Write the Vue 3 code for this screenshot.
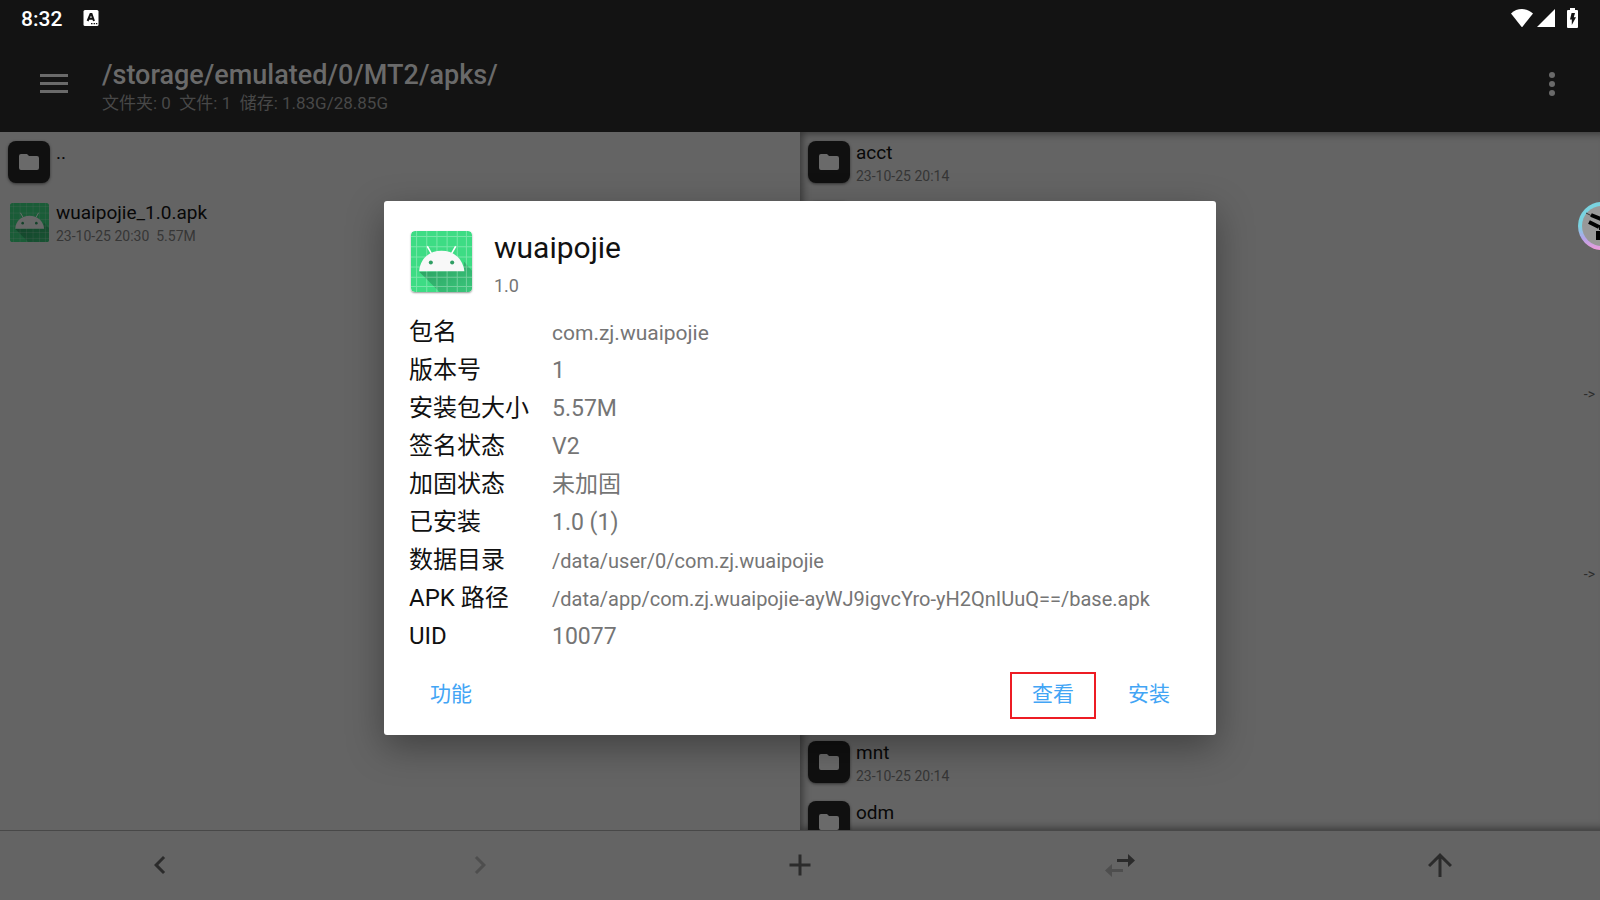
<!-- src/App.vue -->
<template>
  <div class="screen">
    <header class="top">
      <div class="status-bar">
        <span class="clock">8:32</span>
        <svg class="keyboard" viewBox="0 0 16 18" aria-hidden="true">
          <rect x="0.5" y="1" width="15" height="16" rx="1.5" fill="#fff" />
          <path d="M4.6 12 L7.5 5 L8.5 5 L11 12 M5.5 9.8 H10" fill="none" stroke="#131313" stroke-width="2" />
          <path d="M8 14h1.5v1.2H8zM10.6 14h1.5v1.2h-1.5zM13 14h1.3v1.2H13z" fill="#131313" />
        </svg>
        <div class="indicators">
          <svg class="wifi" viewBox="0 0 22 18" aria-hidden="true">
            <path d="M11 18.4 L0 4.4 C3 1.5 7 0 11 0 C15 0 19 1.5 22 4.4 Z" fill="#fff" />
          </svg>
          <svg class="signal" viewBox="0 0 18 18" aria-hidden="true">
            <path d="M0 18 L18 0 V18 Z" fill="#fff" />
          </svg>
          <svg class="battery" viewBox="0 0 11 20" aria-hidden="true">
            <path d="M3 0h5v2h2a1 1 0 0 1 1 1v16a1 1 0 0 1-1 1H1a1 1 0 0 1-1-1V3a1 1 0 0 1 1-1h2z" fill="#fff" />
            <path d="M4.6 5 H8 L6.8 9.2 H9 L4.8 17 V11.6 H3 Z" fill="#131313" />
          </svg>
        </div>
      </div>

      <div class="toolbar">
        <button class="icon-button" type="button" aria-label="Menu">
          <svg width="28" height="20" viewBox="0 0 28 20">
            <path d="M0 0h28v3H0zM0 8h28v3H0zM0 16h28v3H0z" fill="#6a6a6a" />
          </svg>
        </button>
        <div class="location">
          <h1>/storage/emulated/0/MT2/apks/</h1>
          <p>{{ storageInfo }}</p>
        </div>
        <button class="icon-button" type="button" aria-label="More">
          <svg width="6" height="24" viewBox="0 0 6 24">
            <circle v-for="y in [3, 12, 21]" :key="y" cx="3" :cy="y" r="3" fill="#6a6a6a" />
          </svg>
        </button>
      </div>
    </header>

    <main class="panels">
      <ul v-for="(files, side) in panels" :key="side" class="panel" :class="side">
        <li v-for="(file, index) in files" :key="index" class="file">
          <svg v-if="file.apk" class="apk-icon" viewBox="0 0 60 60" aria-hidden="true">
            <use href="#apk-logo" />
          </svg>
          <span v-else class="folder-icon">
            <svg width="20" height="16" viewBox="0 0 20 16" aria-hidden="true">
              <path d="M2 0h6l2 2h8a2 2 0 0 1 2 2v10a2 2 0 0 1-2 2H2a2 2 0 0 1-2-2V2a2 2 0 0 1 2-2z" fill="#6a6a6a" />
            </svg>
          </span>
          <div class="file-text">
            <div class="name">{{ file.name }}</div>
            <div class="meta">{{ file.meta }}</div>
          </div>
          <span v-if="file.link" class="link">-&gt;</span>
        </li>
      </ul>
    </main>

    <nav class="bottom-bar">
      <button
        v-for="action in navActions"
        :key="action.label"
        type="button"
        :aria-label="action.label"
        :disabled="action.disabled"
      >
        <svg width="36" height="36" viewBox="0 0 36 36">
          <path v-if="action.faded" :d="action.faded" class="faded" />
          <path :d="action.path" />
        </svg>
      </button>
    </nav>

    <!-- Floating ball, docked half outside the right edge -->
    <div class="ball">
      <svg viewBox="0 0 40 40" aria-hidden="true">
        <path d="M4 7 L12 11" stroke="#333" stroke-width="1" />
        <path
          d="M9 9 L19 13 M7 16 L17 21 M16 25 V34 M19 19 V24"
          fill="none"
          stroke="#000"
          stroke-width="4"
        />
      </svg>
    </div>

    <div class="overlay">
      <section class="dialog" role="dialog" aria-labelledby="app-name">
        <div class="app">
          <svg class="app-icon" viewBox="0 0 60 60" aria-hidden="true">
            <defs>
              <clipPath id="apk-clip"><rect width="60" height="60" rx="4" /></clipPath>
              <linearGradient id="apk-shade" x1="0" y1="0" x2="1" y2="1">
                <stop offset="0" stop-color="#2a9d60" />
                <stop offset="1" stop-color="#3ac77b" />
              </linearGradient>
              <g id="apk-logo">
                <g clip-path="url(#apk-clip)">
                  <rect width="60" height="60" fill="#3ddc84" />
                  <path d="M8 40 L52 39 V30 L60 39 V60 H28 Z" fill="url(#apk-shade)" />
                  <path
                    d="M5.5 0V60M15.5 0V60M25.5 0V60M35.5 0V60M45.5 0V60M54.5 0V60M0 5.5H60M0 15.5H60M0 25.5H60M0 35.5H60M0 45.5H60M0 54.5H60"
                    stroke="#fff"
                    stroke-opacity="0.3"
                  />
                </g>
                <path d="M16 15 L20 22 M44 15 L40 22" stroke="#fff" stroke-width="1.5" />
                <path d="M8 39.5 C9 27 18 19.5 30 19.5 S51 27 52.5 39.5 Z" fill="#f8f8f8" />
                <circle cx="19.5" cy="31" r="2" fill="#2f9e63" />
                <circle cx="40.5" cy="31" r="2" fill="#2f9e63" />
              </g>
            </defs>
            <use href="#apk-logo" />
          </svg>
          <div>
            <h2 id="app-name">wuaipojie</h2>
            <p>1.0</p>
          </div>
        </div>

        <dl class="details">
          <div v-for="row in details" :key="row.label" class="detail">
            <dt>{{ row.label }}</dt>
            <dd :class="row.size">{{ row.value }}</dd>
          </div>
        </dl>

        <div class="actions">
          <button type="button">功能</button>
          <button type="button" class="marked">查看</button>
          <button type="button">安装</button>
        </div>
      </section>
    </div>
  </div>
</template>

<script setup>
const storageInfo = '文件夹: 0  文件: 1  储存: 1.83G/28.85G'

// Rows without a name stay behind the dialog
const panels = {
  left: [
    { name: '..', meta: '' },
    { name: 'wuaipojie_1.0.apk', meta: '23-10-25 20:30  5.57M', apk: true },
  ],
  right: [
    { name: 'acct', meta: '23-10-25 20:14' },
    {},
    {},
    {},
    { link: true },
    {},
    {},
    { link: true },
    {},
    {},
    { name: 'mnt', meta: '23-10-25 20:14' },
    { name: 'odm', meta: '23-04-20 14:22' },
  ],
}

const details = [
  { label: '包名', value: 'com.zj.wuaipojie', size: 'medium' },
  { label: '版本号', value: '1' },
  { label: '安装包大小', value: '5.57M' },
  { label: '签名状态', value: 'V2' },
  { label: '加固状态', value: '未加固' },
  { label: '已安装', value: '1.0 (1)' },
  { label: '数据目录', value: '/data/user/0/com.zj.wuaipojie', size: 'small' },
  { label: 'APK 路径', value: '/data/app/com.zj.wuaipojie-ayWJ9igvcYro-yH2QnIUuQ==/base.apk', size: 'small' },
  { label: 'UID', value: '10077' },
]

const navActions = [
  { label: 'Back', path: 'M23.1 11.1 21 9l-9 9 9 9 2.1-2.1L16.2 18z' },
  { label: 'Forward', path: 'M15 9l-2.1 2.1 6.9 6.9-6.9 6.9L15 27l9-9z', disabled: true },
  { label: 'Add', path: 'M28.5 19.5h-9v9h-3v-9h-9v-3h9v-9h3v9h9z' },
  {
    label: 'Swap',
    path: 'M15 12h11V7l7 6.5-7 6.5v-5H15z',
    faded: 'M21 25H10v5l-7-6.5 7-6.5v5h11z',
  },
  { label: 'Up', path: 'M6 18l2.1 2.1 8.4-8.4V30h3V11.7l8.4 8.4L30 18 18 6z' },
]
</script>

<style>
body {
  margin: 0;
  background: #646464;
}
</style>

<style scoped>
.screen {
  position: relative;
  display: flex;
  flex-direction: column;
  height: 100vh;
  overflow: hidden;
  background: #646464;
  font-family: Roboto, 'Noto Sans CJK SC', sans-serif;
}

h1,
h2,
p,
ul,
dl,
dd {
  margin: 0;
  padding: 0;
}

button {
  padding: 0;
  border: 0;
  background: none;
  font-family: inherit;
}

svg {
  display: block;
}

/* Status bar and toolbar */
.top {
  background: #131313;
}

.status-bar {
  display: flex;
  align-items: center;
  height: 36px;
  padding: 0 22px 0 21px;
}

.clock {
  padding-top: 2px;
  color: #fff;
  font-size: 21px;
  font-weight: 500;
}

.keyboard {
  width: 16px;
  height: 18px;
  margin-left: 21px;
}

.indicators {
  display: flex;
  align-items: center;
  margin-left: auto;
}

.wifi {
  width: 22px;
  height: 18px;
}

.signal {
  width: 18px;
  height: 18px;
  margin: 0 12px 0 4px;
}

.battery {
  width: 11px;
  height: 20px;
}

.toolbar {
  display: flex;
  align-items: center;
  height: 96px;
  padding: 0 24px 0 30px;
}

.icon-button {
  display: flex;
  align-items: center;
  justify-content: center;
  width: 48px;
  height: 48px;
}

.location {
  flex: 1;
  padding: 4px 0 0 24px;
}

.location h1 {
  color: #6a6a6a;
  font-size: 27px;
  font-weight: 500;
  line-height: 34px;
}

.location p {
  color: #484848;
  font-size: 17px;
  line-height: 22px;
  white-space: pre;
}

/* File panels */
.panels {
  display: flex;
  flex: 1;
  min-height: 0;
}

.panel {
  flex: 1;
  overflow: hidden;
  list-style: none;
}

.panel.right {
  box-shadow: inset 1px 0 8px 1px rgba(0, 0, 0, 0.5);
  margin-right: -8px;
  padding-right: 8px;
}

.file {
  display: flex;
  align-items: flex-start;
  height: 60px;
  padding: 8px 5px 0 8px;
  box-sizing: border-box;
}

.folder-icon {
  display: flex;
  align-items: center;
  justify-content: center;
  width: 42px;
  height: 42px;
  margin-top: 1px;
  border-radius: 8px;
  background: #101010;
  box-shadow: 0 1px 3px rgba(0, 0, 0, 0.5);
}

.apk-icon {
  width: 39px;
  height: 39px;
  margin: 3px 1px 0 2px;
  filter: brightness(0.42);
}

.file-text {
  margin-left: 6px;
}

.name {
  color: #080808;
  font-size: 19px;
  line-height: 26px;
}

.meta {
  color: #363636;
  font-size: 14px;
  line-height: 20px;
  white-space: pre;
}

.link {
  margin-left: auto;
  color: #2c2c2c;
  font-size: 14px;
  line-height: 28px;
}

/* Bottom bar */
.bottom-bar {
  position: relative;
  display: flex;
  height: 69px;
  border-top: 1px solid #484848;
  background: #646464;
}

.bottom-bar button {
  display: flex;
  flex: 1;
  align-items: center;
  justify-content: center;
  padding-bottom: 2px;
  fill: #2b2b2b;
}

.bottom-bar button:disabled,
.bottom-bar .faded {
  fill: #4e4e4e;
}

.ball {
  position: absolute;
  top: 202px;
  right: -26px;
  width: 40px;
  height: 40px;
  border: 4px solid transparent;
  border-radius: 50%;
  background:
    linear-gradient(#989898, #989898) padding-box,
    linear-gradient(#7ad3e0 50%, #b3a5ea 75%, #ef9bd8) border-box;
}

/* Package dialog */
.overlay {
  position: absolute;
  inset: 36px 0 0;
  display: flex;
  align-items: center;
  justify-content: center;
}

.dialog {
  width: 52%;
  padding: 30px 24px 16px;
  border-radius: 3px;
  box-sizing: border-box;
  background: #fff;
  box-shadow: 0 12px 36px rgba(0, 0, 0, 0.35);
}

.app {
  display: flex;
  height: 82px;
  padding-left: 3px;
}

.app-icon {
  width: 61px;
  height: 61px;
  margin-right: 22px;
  border-radius: 4px;
  box-shadow: 0 1px 2px rgba(0, 0, 0, 0.4);
}

.app h2 {
  color: #111;
  font-size: 30px;
  font-weight: 400;
  line-height: 34px;
}

.app p {
  margin-top: 9px;
  color: #757575;
  font-size: 18px;
  line-height: 24px;
}

.detail {
  display: flex;
  align-items: baseline;
  height: 38px;
  padding-left: 1px;
  line-height: 38px;
}

.detail dt {
  flex: none;
  width: 143px;
  color: #111;
  font-size: 24px;
}

.detail dd {
  color: #757575;
  font-size: 23px;
}

.detail .medium {
  font-size: 21px;
}

.detail .small {
  font-size: 20px;
}

.actions {
  display: flex;
  gap: 10px;
  margin-top: 17px;
}

.actions button {
  width: 86px;
  height: 47px;
  padding-bottom: 8px;
  color: #42a5f5;
  font-size: 21px;
}

.actions button:first-child {
  margin-right: auto;
}

/* Highlighted with a red frame */
.actions .marked {
  border: 2px solid #ed1c24;
}
</style>
